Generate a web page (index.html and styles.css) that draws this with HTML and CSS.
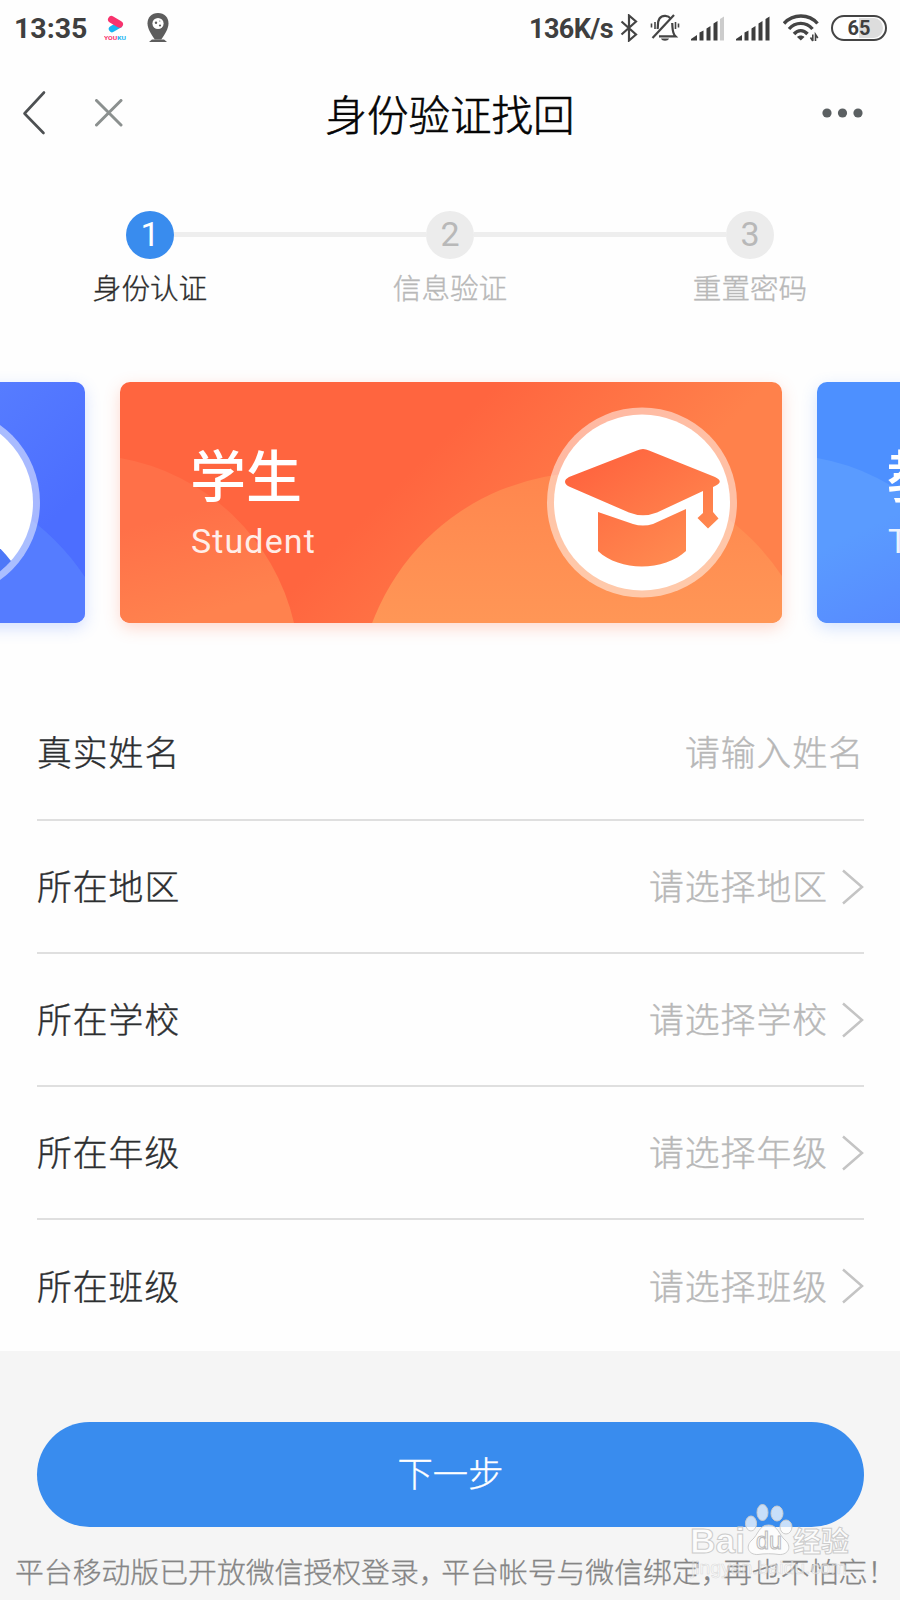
FILE: index.html
```html
<!DOCTYPE html>
<html lang="zh-CN">
<head>
<meta charset="utf-8">
<title>身份验证找回</title>
<link rel="stylesheet" href="styles.css">
</head>
<body>
<main class="screen">
  <header class="status">
    <span class="clock">13:35</span>
    <svg class="youku" width="24" height="26" viewBox="0 0 24 26">
      <path d="M8 14L15 10" stroke="#17b5f2" stroke-width="6.500" stroke-linecap="round"/>
      <path d="M7.500 4.500L15.500 9.200" stroke="#f8336d" stroke-width="7" stroke-linecap="round"/>
      <text x="0" y="25" class="youku-text" textLength="22" lengthAdjust="spacingAndGlyphs"><tspan fill="#f8336d">YOU</tspan><tspan fill="#17b5f2">KU</tspan></text>
    </svg>
    <svg class="pin" width="22" height="30" viewBox="0 0 22 30">
      <path d="M11 0C4.500 0 .500 4.500 .500 10.300C.500 16 4.500 22 7.800 26.500H14.200C17.500 22 21.500 16 21.500 10.300C21.500 4.500 17.500 0 11 0Z" fill="#5d5d5d"/>
      <path d="M2 29H20L17 26.500H5Z" fill="#5d5d5d"/>
      <circle cx="11" cy="10.500" r="5.600" fill="#fff"/>
      <circle cx="9" cy="9.800" r="1.200" fill="#5d5d5d"/><circle cx="13" cy="12.500" r="1.100" fill="#5d5d5d"/><circle cx="12.800" cy="8" r=".6" fill="#5d5d5d"/>
    </svg>
    <span class="speed">136K/s</span>
    <svg class="bt" width="18" height="28" viewBox="0 0 18 28">
      <path d="M1.500 7.500L16 20.500L9 26.500V1.500L16 7.500L1.500 20.500" fill="none" stroke="#444" stroke-width="2.200"/>
    </svg>
    <svg class="mute" width="30" height="28" viewBox="0 0 30 28">
      <g fill="none" stroke="#444" stroke-width="2.200">
        <path d="M20.500 4.500C18.500 1.500 12.500 .500 9.500 4.500C7 8 8.500 12 7.500 15M9 22.300H25.500C22 19 22.800 15.500 22.200 9"/>
        <path d="M2.500 24L24 1"/>
        <path d="M5 8V15M1.500 9.500V13.500M25.500 8V15M28.500 9.500V13.500" stroke-width="1.600"/>
      </g>
      <path d="M11 24.500H19C18 27.500 12 27.500 11 24.500Z" fill="#444"/>
    </svg>
    <svg class="signal" width="34" height="25" viewBox="0 0 34 25">
      <path d="M0 24.500V23L6 19V24.500ZM8.500 16.500L12.500 14.500V24.500H8.500ZM15.500 12.500L19.500 10V24.500H15.500ZM22.500 7.500L26.500 5V24.500H22.500Z" fill="#3d3d3d"/>
      <path d="M29 3L33 .500V24.500H29Z" fill="#ccc"/>
    </svg>
    <svg class="signal2" width="34" height="25" viewBox="0 0 34 25">
      <path d="M0 24.500V23L6 19V24.500ZM8.500 16.500L12.500 14.500V24.500H8.500ZM15.500 12.500L19.500 10V24.500H15.500ZM22.500 7.500L26.500 5V24.500H22.500ZM29.500 3L33.500 .500V24.500H29.500Z" fill="#3d3d3d"/>
    </svg>
    <svg class="wifi" width="36" height="28" viewBox="0 0 36 28">
      <g fill="none" stroke="#444" stroke-width="3.400">
        <path d="M1 9.500C10 -.500 26 -.500 34.500 9.500M6 15C12.500 7.500 23 7.500 29.500 15M11 20C15 15.500 20.500 15.500 24.500 20"/>
      </g>
      <path d="M14 23C16 21 19.500 21 21.500 23L17.800 26.500Z" fill="#444"/>
      <path d="M29.800 20.500V27M27.500 23.500L29.800 27M32.500 27V20.500L34.800 24" fill="none" stroke="#444" stroke-width="1.600"/>
    </svg>
    <span class="battery">65</span>
  </header>

  <nav class="nav">
    <svg width="24" height="46" viewBox="0 0 24 46"><path d="M22 2.500L2.500 23.500L21.500 43" fill="none" stroke="#4d5052" stroke-width="2.600" stroke-linecap="round" stroke-linejoin="round"/></svg>
    <svg class="close" width="28" height="28" viewBox="0 0 28 28"><path d="M1.500 1.500L26 26M26 1.500L1.500 26" stroke="#8b908f" stroke-width="3" stroke-linecap="round"/></svg>
    <h1 class="title">身份验证找回</h1>
    <svg class="more" width="42" height="12" viewBox="0 0 42 12" fill="#5b6062"><circle cx="5" cy="6" r="4.600"/><circle cx="20.500" cy="6" r="4.600"/><circle cx="36" cy="6" r="4.600"/></svg>
  </nav>

  <ol class="steps">
    <li class="step active"><span class="num">1</span><span class="step-label">身份认证</span></li>
    <li class="step"><span class="num">2</span><span class="step-label">信息验证</span></li>
    <li class="step"><span class="num">3</span><span class="step-label">重置密码</span></li>
  </ol>

  <section class="carousel">
    <article class="card parent">
      <svg class="art" viewBox="0 0 661.500 241">
        <circle cx="-38" cy="289" r="217" fill="#6c93ff" opacity=".35"/>
        <circle cx="469" cy="322" r="231" fill="#567dff" opacity=".9"/>
        <circle cx="522" cy="120.500" r="95" fill="#fff" opacity=".5"/>
        <circle cx="522" cy="120.500" r="88" fill="#fff"/>
        <path d="M522 135C550 142 572 158 588 179A88 88 0 0 1 456 179C472 158 494 142 522 135Z" fill="#4d78f8"/>
      </svg>
    </article>
    <article class="card student">
      <svg class="art" viewBox="0 0 661.500 241">
        <defs>
          <linearGradient id="leaf" x1="0" y1="0" x2=".3" y2="1"><stop offset="0" stop-color="#ff7048"/><stop offset=".4" stop-color="#ff7048"/><stop offset="1" stop-color="#ff824e"/></linearGradient>
          <linearGradient id="cap" gradientUnits="userSpaceOnUse" x1="480" y1="75" x2="550" y2="185"><stop offset="0" stop-color="#ff653f"/><stop offset="1" stop-color="#ff8a50"/></linearGradient>
          <linearGradient id="hill" x1="0" y1="0" x2="0" y2="1"><stop offset="0" stop-color="#ff864e"/><stop offset=".32" stop-color="#ff9656"/></linearGradient>
        </defs>
        <path d="M0 76A217 217 0 0 1 174 241H0Z" fill="url(#leaf)"/>
        <circle cx="469" cy="322" r="231.500" fill="url(#hill)"/>
        <circle cx="522" cy="120.500" r="95" fill="#fff" opacity=".5"/>
        <circle cx="522" cy="120.500" r="88" fill="#fff"/>
        <g fill="url(#cap)">
          <path d="M517 68.500Q523 65.500 529 68.500L595 95Q604 99.500 596 103.500L593 105V130L598.500 136.500L588 146.500L577.500 136L583 131V109L537 130.500Q523 136 509 130.500L449 104.500Q441 99.500 449 95Z"/>
          <path d="M478 130L513 142Q523 145 533 142L566 127V169C545 189 500 190 478 169Z"/>
        </g>
      </svg>
      <div class="caption"><h2>学生</h2><p>Student</p></div>
    </article>
    <article class="card teacher">
      <svg class="art" viewBox="0 0 661.500 241">
        <defs><linearGradient id="tleaf" x1="0" y1="0" x2=".5" y2="1"><stop offset=".45" stop-color="#5a9bff"/><stop offset="1" stop-color="#578aff"/></linearGradient></defs>
        <path d="M0 76A217 217 0 0 1 174 241H0Z" fill="url(#tleaf)"/>
      </svg>
      <div class="caption"><h2>教师</h2><p>Teacher</p></div>
    </article>
  </section>

  <form class="form">
    <div class="row first"><label>真实姓名</label><span class="value">请输入姓名</span></div>
    <div class="row"><label>所在地区</label><span class="value">请选择地区</span><svg class="arrow" viewBox="0 0 22 36"><path d="M1 1.500L20 18L1 34.500"/></svg></div>
    <div class="row"><label>所在学校</label><span class="value">请选择学校</span><svg class="arrow" viewBox="0 0 22 36"><path d="M1 1.500L20 18L1 34.500"/></svg></div>
    <div class="row"><label>所在年级</label><span class="value">请选择年级</span><svg class="arrow" viewBox="0 0 22 36"><path d="M1 1.500L20 18L1 34.500"/></svg></div>
    <div class="row last"><label>所在班级</label><span class="value">请选择班级</span><svg class="arrow" viewBox="0 0 22 36"><path d="M1 1.500L20 18L1 34.500"/></svg></div>
  </form>

  <footer class="footer">
    <button class="next" type="button">下一步</button>
    <p class="tip">平台移动版已开放微信授权登录<span class="comma">，</span>平台帐号与微信绑定<span class="comma">，</span>再也不怕忘<span class="bang">！</span></p>
  </footer>

  <svg class="watermark" width="170" height="84" viewBox="0 0 170 84">
    <g class="mark">
      <text x="1" y="51" font-size="35" textLength="55" lengthAdjust="spacingAndGlyphs">Bai</text>
      <g stroke-width="1">
        <ellipse cx="62" cy="21.500" rx="5.500" ry="7.500"/><ellipse cx="73.500" cy="10.500" rx="5.500" ry="8"/><ellipse cx="88" cy="11.500" rx="6" ry="7.500"/><ellipse cx="97" cy="25" rx="6" ry="7"/>
        <path d="M79.500 23C89 23 90 33 96 38C103 44 100 53 90 52.500C84 51.500 75 51.500 69 52.500C59 53 56 44 63 38C69 33 70 23 79.500 23Z"/>
      </g>
      <text x="67" y="47" font-size="23" class="du" textLength="26" lengthAdjust="spacingAndGlyphs">du</text>
      <text x="104" y="49.500" font-size="28" class="cjk">经验</text>
      <text x="2" y="72" font-size="19" class="url" textLength="156" lengthAdjust="spacingAndGlyphs">jingyan.baidu.com</text>
    </g>
  </svg>
</main>
</body>
</html>
```
FILE: styles.css
```css
* { box-sizing: border-box; }
body, h1, h2, p, ol { margin: 0; padding: 0; }
body {
  width: 900px;
  height: 1600px;
  overflow: hidden;
  font-family: Roboto, "Noto Sans CJK SC", sans-serif;
  background: #fff;
}
svg { display: block; flex: none; }
.screen {
  position: relative;
  display: flex;
  flex-direction: column;
  width: 900px;
  height: 1600px;
  overflow: hidden;
  background: #fefefe;
}

/* status bar */
.status {
  display: flex;
  align-items: center;
  height: 56px;
  padding-left: 14px;
  color: #3f3f3f;
  font-weight: 700;
}
.clock { width: 90px; font-size: 28.5px; margin-top: 1px; }
.youku-text { font: 700 6px Roboto, sans-serif; }
.pin { margin-left: 19px; }
.speed { margin-left: 360px; margin-top: 1px; width: 91px; font-size: 27px; letter-spacing: -.6px; }
.mute { margin-left: 12px; }
.signal { margin-left: 11px; }
.signal2 { margin-left: 11px; }
.wifi { margin-left: 13px; }
.battery {
  width: 56px;
  height: 26px;
  margin-left: 12px;
  border: 2.5px solid #444;
  border-radius: 13px;
  background: linear-gradient(90deg, #fff 50%, #ddd 50%) content-box;
  padding: 1px 2px;
  font-size: 20px;
  line-height: 20px;
  text-align: center;
  overflow: hidden;
}

/* title bar */
.nav {
  display: flex;
  align-items: center;
  height: 114px;
  padding: 0 36px 0 22px;
}
.close { margin-left: 49px; }
.title {
  width: 300px;
  margin-top: 7px;
  margin-left: 177px;
  font-size: 41.5px;
  font-weight: 300;
  -webkit-text-stroke: .6px;
  line-height: 60px;
  text-align: center;
  white-space: nowrap;
  color: #050505;
}
.more { margin-left: auto; }

/* progress */
.steps {
  display: grid;
  grid-template-columns: repeat(3, 300px);
  height: 183px;
  padding-top: 41px;
  list-style: none;
}
.step {
  position: relative;
  display: flex;
  flex-direction: column;
  align-items: center;
  color: #b8b8b8;
}
.step + .step::before {
  content: "";
  position: absolute;
  top: 21px;
  right: 174px;
  width: 252px;
  height: 5px;
  background: #eee;
}
.num {
  width: 48px;
  height: 48px;
  border-radius: 50%;
  background: #ececec;
  font-size: 34px;
  line-height: 47px;
  text-align: center;
}
.step-label {
  margin-top: 9px;
  font-size: 28.6px;
  font-weight: 300;
  line-height: 42px;
  -webkit-text-stroke: .35px;
}
.active { color: #2c2c2c; }
.active .num { background: #398cee; color: #fff; }

/* identity cards */
.carousel {
  display: flex;
  gap: 35.5px;
  height: 309px;
  padding-top: 28.5px;
  margin-left: -577px;
}
.card {
  position: relative;
  flex: none;
  width: 661.5px;
  height: 241px;
  border-radius: 10px;
  color: #fff;
}
.art { width: 661.5px; height: 241px; border-radius: 10px; overflow: hidden; }
.student { background: linear-gradient(135deg, #ff653f 42%, #ff814b 72%); box-shadow: 0 5px 16px rgba(255, 110, 70, .26); }
.parent { background: linear-gradient(135deg, #587fff 60%, #4c6eff 85%); box-shadow: 0 5px 16px rgba(77, 125, 255, .24); }
.teacher { background: #4d90ff; box-shadow: 0 5px 16px rgba(77, 140, 255, .24); }
.caption { position: absolute; left: 70px; top: 56px; white-space: nowrap; }
.caption h2 { font-size: 56px; font-weight: 500; line-height: 80px; }
.caption p { margin: 3px 0 0 1px; font-size: 34px; line-height: 40px; letter-spacing: 1.1px; opacity: .88; }

/* form */
.form { height: 689px; padding: 23px 36px 0 37px; }
.row {
  display: flex;
  align-items: center;
  height: 133px;
  border-bottom: 2px solid #dfdfdf;
  font-size: 34.8px;
  font-weight: 300;
  letter-spacing: 1px;
  color: #2c2e30;
  -webkit-text-stroke: .4px;
}
.row.first { height: 136px; }
.row.last { height: 132px; border-bottom: 0; }
.row label, .value { margin-bottom: 3px; }
.value { margin-left: auto; color: #b8b8b8; }
.arrow { width: 22px; height: 36px; margin-left: 14px; fill: none; stroke: #c4c4c4; stroke-width: 2.5; }

/* bottom */
.footer { flex: 1; padding: 70.500px 36px 0 37px; background: #f5f5f5; }
.next {
  display: block;
  width: 827px;
  height: 105px;
  border: 0;
  border-radius: 53px;
  background: #398cee;
  color: #fff;
  font: 300 35.3px/105px Roboto, "Noto Sans CJK SC", sans-serif;
  -webkit-text-stroke: .4px;
}
.tip {
  margin: 25px -36px 0 -22px;
  font-size: 28.85px;
  font-weight: 300;
  line-height: 42px;
  white-space: nowrap;
  color: #858585;
  -webkit-text-stroke: .3px;
}
.comma { margin-right: -6.5px; }

.watermark { position: absolute; left: 689px; top: 1502px; }
.mark { fill: rgba(255, 255, 255, .72); stroke: #ccc; stroke-width: 1; font-family: "Liberation Sans", sans-serif; font-weight: 700; }
.mark .du { fill: #fff; stroke: #bbb; font-weight: 400; }
.mark .cjk { font-family: "Noto Sans CJK SC", sans-serif; }
.mark .url { fill: rgba(255, 255, 255, .55); stroke: rgba(190, 190, 190, .5); stroke-width: .6; font-weight: 400; }
```
